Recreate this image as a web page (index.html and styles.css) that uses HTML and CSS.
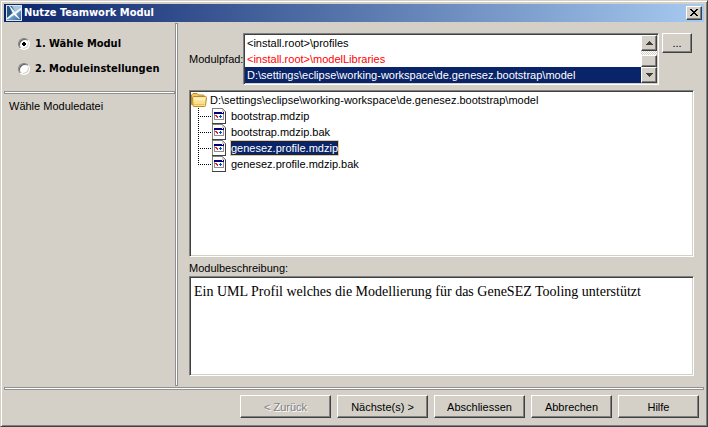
FILE: index.html
```html
<!DOCTYPE html>
<html lang="de">
<head>
<meta charset="utf-8">
<title>Nutze Teamwork Modul</title>
<link rel="stylesheet" href="styles.css">
</head>
<body>
<svg class="defs" aria-hidden="true">
  <symbol id="file" viewBox="0 0 14 16" shape-rendering="crispEdges">
    <path d="M0 0h11v1h1v1h1v1h1v13H0z" fill="#808080"/>
    <path d="M1 1h9v3h3v11H1z" fill="#fff"/>
    <path d="M10 1h1v1h1v1h1v1h-3z" fill="#d4d0c8"/>
    <path d="M13 4h1v12H0v-1h13z" fill="#404040"/>
    <path d="M2 4h10v8H2z" fill="#909090"/>
    <path d="M3 6h8v5H3z" fill="#fff"/>
    <path d="M2 4h10v2H2z" fill="#00007b"/>
    <path d="M10 4h1v1h-1z" fill="#fff"/>
    <path d="M4 7h1v1h1v2H5V9H4V8H3V7z" fill="#e02020"/>
    <path d="M8 7h1v1h1v1H9v1H8V9H7V8h1z" fill="#1840d0"/>
  </symbol>
</svg>
<main class="window">
  <header class="titlebar">
    <svg class="logo" viewBox="0 0 16 16" aria-hidden="true">
      <defs><linearGradient id="lg" x1="0" y1="0" x2="1" y2="1"><stop offset="0" stop-color="#173f70"/><stop offset=".5" stop-color="#7fa6cc"/><stop offset="1" stop-color="#2e629c"/></linearGradient></defs>
      <path d="M0 0h16v16H0z" fill="#dbe6f0"/>
      <path d="M1 1h14v14H1z" fill="url(#lg)"/>
      <path d="M6 1h9v3l-5 4z" fill="#a9c6df"/>
      <path d="M1 1h2l3 7-5 5z" fill="#245386"/>
      <path d="M3 1h1l5 6 6-4v2l-5 4 4 5h-1l-5-4-6 4H1v-1l6-5z" fill="#f4f9fd"/>
    </svg>
    <h1 class="title">Nutze Teamwork Modul</h1>
    <button class="close" type="button" aria-label="Schließen">
      <svg viewBox="0 0 8 7" shape-rendering="crispEdges" aria-hidden="true"><path d="M0 0h2v1h1v1h2V1h1V0h2v1H7v1H6v1H5v1h1v1h1v1h1v1H6V6H5V5H3v1H2v1H0V6h1V5h1V4h1V3H2V2H1V1H0z"/></svg>
    </button>
  </header>
  <div class="content">
    <aside class="sidebar">
      <div class="steps">
        <label class="step"><input type="radio" name="step" checked>1. Wähle Modul</label>
        <label class="step"><input type="radio" name="step">2. Moduleinstellungen</label>
      </div>
      <hr class="rule">
      <p class="hint">Wähle Moduledatei</p>
    </aside>
    <div class="divider"></div>
    <section class="panel">
      <div class="path-row">
        <label class="path-label" for="path">Modulpfad:</label>
        <div class="list sunken">
          <select id="path" class="paths" size="3">
            <option>&lt;install.root&gt;\profiles</option>
            <option class="missing">&lt;install.root&gt;\modelLibraries</option>
            <option selected>D:\settings\eclipse\working-workspace\de.genesez.bootstrap\model</option>
          </select>
          <div class="scrollbar">
            <button class="arrow" type="button" aria-label="Nach oben"><svg viewBox="0 0 7 4" shape-rendering="crispEdges" aria-hidden="true"><path d="M3 0h1v1h1v1h1v1h1v1H0V3h1V2h1V1h1z"/></svg></button>
            <div class="track"><div class="thumb"></div></div>
            <button class="arrow" type="button" aria-label="Nach unten"><svg viewBox="0 0 7 4" shape-rendering="crispEdges" aria-hidden="true"><path d="M0 0h7v1H6v1H5v1H4v1H3V3H2V2H1V1H0z"/></svg></button>
          </div>
        </div>
        <button class="browse" type="button">...</button>
      </div>
      <div class="tree sunken">
        <div class="root">
          <svg class="folder" viewBox="0 0 16 14" aria-hidden="true">
            <path d="M.5 11.500V2L2 .5h4L7.500 2h5L13.500 3.500v8z" fill="#f3c95c" stroke="#b98a2c"/>
            <path d="M2 12.500L1.500 4.500Q1.500 3.500 2.500 3.500h12q1 0 1 1l-1 8q0 1-1 1H3q-1 0-1-1z" fill="#fde08a" stroke="#b98a2c"/>
            <path d="M3 4.500h11v3H3z" fill="#fff0b8"/>
            <path d="M3 11.500h10.500" stroke="#f0c050"/>
          </svg>
          <span>D:\settings\eclipse\working-workspace\de.genesez.bootstrap\model</span>
        </div>
        <ul class="files">
          <li><svg class="file"><use href="#file"/></svg><span class="name">bootstrap.mdzip</span></li>
          <li><svg class="file"><use href="#file"/></svg><span class="name">bootstrap.mdzip.bak</span></li>
          <li><svg class="file"><use href="#file"/></svg><span class="name selected">genesez.profile.mdzip</span></li>
          <li><svg class="file"><use href="#file"/></svg><span class="name">genesez.profile.mdzip.bak</span></li>
        </ul>
      </div>
      <label class="desc-label" for="desc">Modulbeschreibung:</label>
      <textarea id="desc" class="desc sunken" readonly>Ein UML Profil welches die Modellierung für das GeneSEZ Tooling unterstützt</textarea>
    </section>
  </div>
  <hr class="rule rule-footer">
  <footer class="footer">
    <button class="wide" type="button" disabled>&lt; Zurück</button>
    <button class="wide" type="button">Nächste(s) &gt;</button>
    <button class="wide" type="button">Abschliessen</button>
    <button type="button">Abbrechen</button>
    <button type="button">Hilfe</button>
  </footer>
</main>
</body>
</html>
```
FILE: styles.css
```css
* { box-sizing: border-box; }

body {
  margin: 0;
  font: 11px/16px "Liberation Sans", Tahoma, sans-serif;
  color: #000;
  background: #d4d0c8;
}

.defs { display: none; }

.window {
  display: flex;
  flex-direction: column;
  min-height: 100vh;
  padding: 2px;
  border: 1px solid;
  border-color: #d4d0c8 #404040 #404040 #d4d0c8;
  box-shadow: inset 1px 1px #fff, inset -1px -1px #808080;
}

.titlebar {
  display: flex;
  align-items: center;
  gap: 2px;
  height: 18px;
  margin: 1px 1px 0;
  padding: 0 2px;
  background: linear-gradient(to right, #0a246a, #a6caf0);
}

.logo { width: 16px; height: 16px; }

.title {
  flex: 1;
  margin: 0;
  font: bold 11px/16px "DejaVu Sans Condensed", "DejaVu Sans", sans-serif;
  color: #fff;
}

button {
  font: inherit;
  color: #000;
  padding: 0;
  border: 1px solid;
  border-color: #fff #404040 #404040 #fff;
  border-radius: 0;
  background: #d4d0c8;
  box-shadow: inset -1px -1px #808080;
}

.close {
  display: grid;
  place-items: center;
  width: 16px;
  height: 14px;
  padding: 0 1px 1px 0;
}

.close svg { width: 8px; height: 7px; }

.content { display: flex; flex: 1; }

.sidebar { width: 171px; margin-left: 1px; }

.rule {
  height: 3px;
  margin: 0;
  border: 1px solid #909090;
  background: #fff;
}

.rule-footer { margin: 0 1px; }

.divider {
  width: 3px;
  margin: 1px 0;
  border: 1px solid #909090;
  background: #fff;
}

.steps {
  display: flex;
  flex-direction: column;
  gap: 9px;
  height: 69px;
  padding: 14px 0 0 14px;
}

.step {
  display: flex;
  align-items: center;
  gap: 5px;
  font: bold 11px/16px "DejaVu Sans Condensed", "DejaVu Sans", sans-serif;
  white-space: nowrap;
}

.step input {
  appearance: none;
  width: 12px;
  height: 12px;
  margin: 0;
  border: 1px solid;
  border-color: #808080 #fff #fff #808080;
  border-radius: 50%;
  background: #fff;
  box-shadow: inset 1px 1px #606060, inset -1px -1px #d4d0c8;
}

.step input:checked { background: radial-gradient(circle, #000 2px, #fff 2px); }

.hint { margin: 4px 5px; }

.panel {
  display: flex;
  flex: 1;
  flex-direction: column;
  min-width: 0;
  padding: 11px;
}

.sunken {
  border: 1px solid;
  border-color: #808080 #fff #fff #808080;
  background: #fff;
  box-shadow: inset 1px 1px #404040, inset -1px -1px #d4d0c8;
}

.path-row { display: flex; align-items: center; }

.path-label { width: 54px; }

.list { display: flex; flex: 1; min-width: 0; padding: 1px; }

.paths {
  flex: 1;
  min-width: 0;
  height: 48px;
  padding: 0;
  border: 0;
  border-radius: 0;
  outline: 0;
  font: inherit;
  color: #000;
  background: #fff;
  overflow: hidden;
  scrollbar-width: none;
}

.paths option {
  height: 16px;
  min-height: 16px;
  padding: 2px 2px 0;
}

.paths .missing { color: #f00; }

.paths option:checked {
  color: #fff;
  -webkit-text-fill-color: #fff;
  background: linear-gradient(#0a246a, #0a246a);
}

.scrollbar { display: flex; flex-direction: column; width: 16px; }

.arrow {
  display: grid;
  place-items: center;
  width: 16px;
  height: 16px;
  fill: #404040;
}

.arrow svg { width: 7px; height: 4px; }

.track {
  display: flex;
  flex: 1;
  flex-direction: column;
  justify-content: flex-end;
  background: repeating-conic-gradient(#fff 0 25%, #d4d0c8 0 50%) 0 0 / 2px 2px;
}

.thumb {
  height: 12px;
  border: 1px solid;
  border-color: #fff #404040 #404040 #fff;
  background: #d4d0c8;
  box-shadow: inset -1px -1px #808080;
}

.browse {
  align-self: flex-start;
  width: 30px;
  height: 20px;
  margin: 0 2px 0 3px;
}

.tree {
  flex: 163;
  margin-top: 5px;
  padding: 1px;
}

.root { display: flex; align-items: center; gap: 3px; height: 16px; }

.folder { width: 16px; height: 14px; }

.files { margin: 0; padding: 0 0 0 7px; list-style: none; }

.files li {
  display: flex;
  align-items: center;
  height: 16px;
  padding-left: 14px;
  background:
    repeating-linear-gradient(to bottom, #000 0 1px, transparent 1px 2px) 0 0 / 1px 100% no-repeat,
    repeating-linear-gradient(to right, #000 0 1px, transparent 1px 2px) 0 8px / 14px 1px no-repeat;
}

.files li:last-child { background-size: 1px 8px, 14px 1px; }

.file { width: 14px; height: 16px; margin-right: 4px; }

.name { padding: 0 1px; line-height: 16px; }

.selected {
  padding: 0;
  border: 1px solid #f0c878;
  line-height: 14px;
  color: #fff;
  background: #0a246a;
}

.desc-label { margin-top: 4px; line-height: 15px; }

.desc {
  flex: 88;
  width: 100%;
  min-height: 60px;
  padding: 5px 4px;
  outline: 0;
  resize: none;
  font: 14px/19px "Liberation Serif", "Times New Roman", serif;
  color: #000;
}

.footer {
  display: flex;
  justify-content: flex-end;
  gap: 6px;
  padding: 5px 6px 6px;
}

.footer button { width: 81px; height: 23px; }

.footer .wide { width: 91px; }

.footer button:disabled { color: #808080; text-shadow: 1px 1px #fff; }
```
